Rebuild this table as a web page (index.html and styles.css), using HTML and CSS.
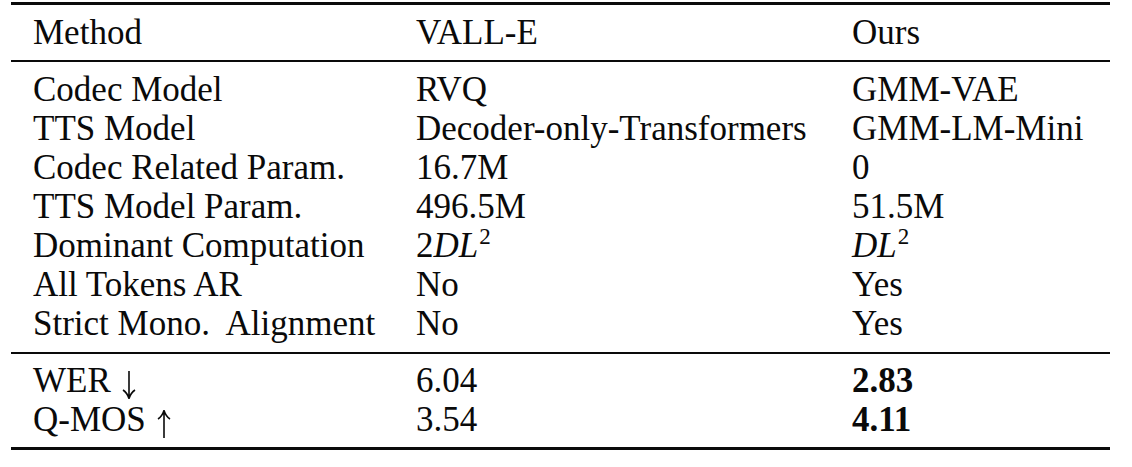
FILE: index.html
```html
<!DOCTYPE html>
<html>
<head>
<meta charset="utf-8">
<link rel="stylesheet" href="styles.css">
</head>
<body>
<div class="table">
  <div class="rule thick"></div>
  <div class="group head">
    <div class="row"><span class="c1">Method</span><span class="c2">VALL-E</span><span class="c3">Ours</span></div>
  </div>
  <div class="rule mid"></div>
  <div class="group body">
    <div class="row"><span class="c1">Codec Model</span><span class="c2">RVQ</span><span class="c3">GMM-VAE</span></div>
    <div class="row"><span class="c1">TTS Model</span><span class="c2">Decoder-only-Transformers</span><span class="c3">GMM-LM-Mini</span></div>
    <div class="row"><span class="c1">Codec Related Param.</span><span class="c2">16.7M</span><span class="c3">0</span></div>
    <div class="row"><span class="c1">TTS Model Param.</span><span class="c2">496.5M</span><span class="c3">51.5M</span></div>
    <div class="row"><span class="c1">Dominant Computation</span><span class="c2 math">2<i>DL</i><sup>2</sup></span><span class="c3 math"><i>DL</i><sup>2</sup></span></div>
    <div class="row"><span class="c1">All Tokens AR</span><span class="c2">No</span><span class="c3">Yes</span></div>
    <div class="row"><span class="c1">Strict Mono.&nbsp; Alignment</span><span class="c2">No</span><span class="c3">Yes</span></div>
  </div>
  <div class="rule mid"></div>
  <div class="group res">
    <div class="row"><span class="c1">WER <svg class="arr" viewBox="0 0 14 28" width="14" height="28"><path d="M7 0 V27 M1 19 Q5 21.5 7 27.5 Q9 21.5 13 19"/></svg></span><span class="c2">6.04</span><span class="c3 best">2.83</span></div>
    <div class="row"><span class="c1">Q-MOS <svg class="arr" viewBox="0 0 14 28" width="14" height="28"><path d="M7 28 V1 M1 9 Q5 6.5 7 0.5 Q9 6.5 13 9"/></svg></span><span class="c2">3.54</span><span class="c3 best">4.11</span></div>
  </div>
  <div class="rule thick"></div>
</div>
</body>
</html>
```

FILE: styles.css
```css
html, body {
  margin: 0;
  padding: 0;
  background: #fff;
}
body {
  font-family: "Liberation Serif", "Times New Roman", serif;
  font-size: 35px;
  line-height: 38.5px;
  color: #0a0a0a;
}
.table {
  width: 1099px;
  margin-left: 11px;
  padding-top: 2px;
}
.rule {
  background: #0a0a0a;
}
.rule.thick {
  height: 3px;
}
.rule.mid {
  height: 2px;
}
.group.head {
  padding: 9px 0 7.5px;
}
.group.body {
  padding: 7.5px 0 9.5px;
  line-height: 39px;
}
.group.res {
  padding: 8px 0 8px;
}
.row {
  display: grid;
  grid-template-columns: 383px 436px 1fr;
}
.row > span {
  padding-left: 22px;
  white-space: nowrap;
}
.math i {
  font-style: italic;
}
.math sup {
  font-size: 23px;
  line-height: 0;
  vertical-align: 13px;
  margin-left: 1px;
}
.arr {
  vertical-align: -7px;
  margin-left: 2px;
  fill: none;
  stroke: #0a0a0a;
  stroke-width: 1.6;
}
.best {
  font-weight: bold;
}
```
